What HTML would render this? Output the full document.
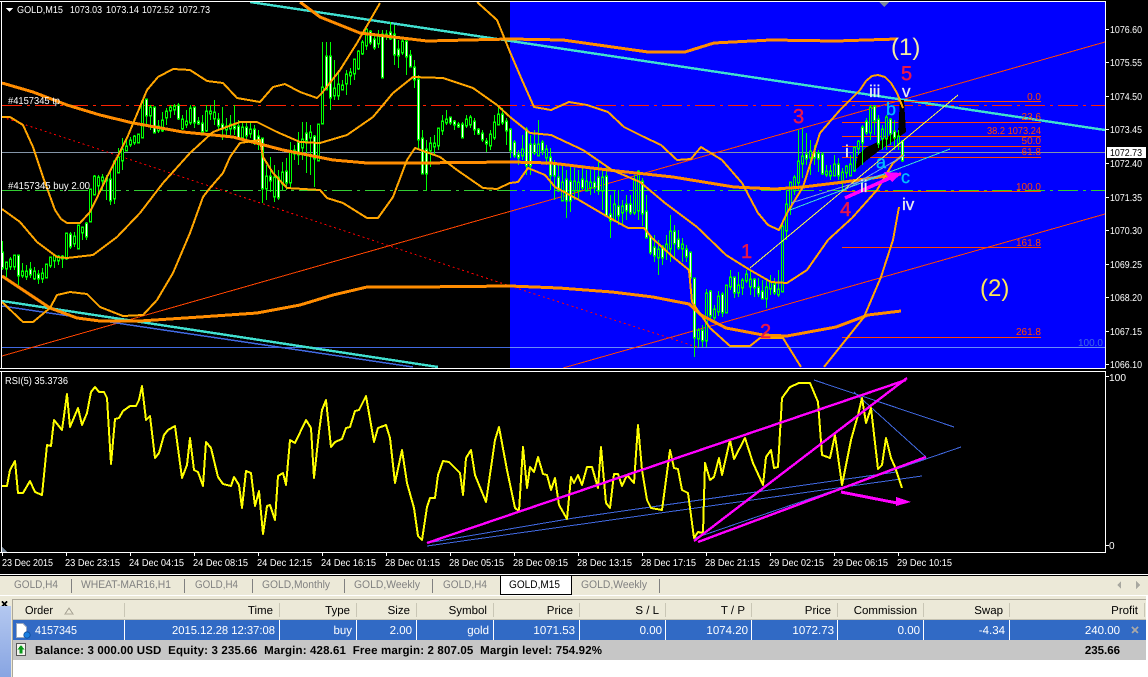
<!DOCTYPE html>
<html><head><meta charset="utf-8"><title>GOLD,M15</title>
<style>
html,body{margin:0;padding:0;background:#000;overflow:hidden}
svg{display:block}
text{font-family:"Liberation Sans",sans-serif;font-size:10px}
.l{fill:none;stroke:#ffa500;stroke-width:2;stroke-linejoin:round}
.m{fill:none;stroke:#ff8c00;stroke-width:3;stroke-linejoin:round}
.ax{fill:#fff;font-size:10px}
.dt{fill:#fff;font-size:10px}
.f{fill:#ff4500;font-size:10px;text-anchor:end}
.fl{stroke:#ff4500;stroke-width:1}
.tb{fill:#808080;font-size:11px}
.sp{stroke:#808080;stroke-width:1}
.h{fill:#000;font-size:11.5px;text-anchor:end}
.r{fill:#fff;font-size:11.5px;text-anchor:end}
.hs{stroke:#fff;stroke-width:1}
.b{font-weight:bold;font-size:11.5px;fill:#000}
.w{font-size:20px;fill:#e8174a;stroke:#e8174a;stroke-width:.5}
.v{font-size:17px;fill:#ececec;stroke:#ececec;stroke-width:.3}
.c{font-size:18px;fill:#00bfff;stroke:#00bfff;stroke-width:.3}
</style></head><body>
<svg xmlns="http://www.w3.org/2000/svg" width="1148" height="677" viewBox="0 0 1148 677" shape-rendering="crispEdges">
<defs>
<path id="bw" d="M2 253V267M18 256V275M30 270V274M38 275V278M70 235V246M86 224V236M110 180V200M146 100V115M154 108V132M178 106V118M194 108V122M198 122V123M202 124V131M218 120V125M222 125V128M234 127V128M238 127V137M246 128V135M254 130V142M258 137V143M262 139V188M270 177V180M278 178V197M286 172V182M294 151V153M298 143V154M306 134V140M314 137V158M326 57V89M330 57V97M370 32V42M374 40V47M382 35V77M390 33V38M394 35V54M398 50V55M406 42V56M410 56V66M414 68V79M418 80V139M422 139V173M426 150V173M450 118V122M454 122V124M458 125V126M462 125V137M474 122V129M478 130V133M482 134V139M486 142V143M502 115V122M506 122V130M510 130V150M514 143V155M518 155V157M526 130V165M530 145V165M534 145V152M542 143V150M550 158V175M554 165V175M558 178V190M566 180V200M570 182V200M582 180V187M594 183V187M598 178V190M606 177V215M610 215V220M618 207V215M626 205V210M630 205V212M642 182V213M646 212V237M650 237V252M654 248V255M662 247V257M674 232V243M678 240V247M686 250V256M690 253V277M694 279V337M702 331V340M710 292V315M722 295V312M734 278V292M754 280V287M758 288V293M762 292V298M774 285V292M806 155V158M814 153V157M818 154V158M822 155V173M838 165V175M862 128V142M866 122V132M874 107V120M878 120V143M890 120V133M894 132V137M902 142V160"/>
<path id="bu" d="M6 263V268M10 260V266M14 256V266M22 272V275M26 272V276M34 272V278M42 274V278M46 265V277M50 258V265M54 256V260M58 257V260M62 257V258M66 234V258M74 237V243M78 226V248M82 228V232M90 190V221M94 177V194M98 178V185M102 178V180M106 179V180M114 162V198M118 158V172M122 150V160M126 147V150M130 141V144M134 137V142M138 135V142M142 102V137M150 108V115M158 127V130M162 121V130M166 112V117M170 108V110M174 107V109M182 120V128M186 122V124M190 109V122M206 112V130M210 112V113M214 113V118M226 127V129M230 125V128M242 128V137M250 130V133M266 177V188M274 178V196M282 173V183M290 152V182M302 140V147M310 133V137M318 125V160M322 88V123M334 89V95M338 85V95M342 86V89M346 75V83M350 73V75M354 60V73M358 52V68M362 43V53M366 30V45M378 37V43M386 35V36M402 42V52M430 144V150M434 144V146M438 129V145M442 122V130M446 120V122M466 120V125M470 118V124M490 135V145M494 123V137M498 115V124"/>
<path id="bv" d="M522 150V155M538 145V155M546 150V157M562 183V200M574 182V190M578 183V190M586 182V190M590 183V187M602 178V190M614 205V220M622 207V212M634 180V212M638 172V210M658 250V257M666 245V250M670 232V248M682 245V248M698 331V338M706 294V340M714 310V317M718 297V311M726 286V312M730 278V286M738 286V292M742 281V287M746 275V280M750 280V286M766 288V298M770 283V288M778 290V294M782 227V291M786 205V230M790 183V207M794 178V190M798 162V182M802 157V163M810 152V157M826 172V174M830 172V175M834 165V175M842 173V182M846 167V172M850 165V175M854 148V170M858 142V148M870 108V132M882 130V138M886 118V138M898 137V143"/>
<linearGradient id="side" x1="0" y1="0" x2="0" y2="1"><stop offset="0" stop-color="#b4c8f0"/><stop offset="1" stop-color="#88a5e2"/></linearGradient>
</defs>

<rect width="1148" height="677" fill="#000"/>
<rect x="510" y="2" width="595" height="366" fill="#0000ff"/>

<!-- horizontal levels -->
<path d="M2 152.5H1105" stroke="#8495a8" fill="none"/>
<path d="M2 347.5H510" stroke="#4169e1" fill="none"/>
<path d="M510 347.5H1105" stroke="#6a8cf5" fill="none"/>
<path d="M2 105.5H1105" stroke="#ff2200" stroke-dasharray="20 5 3 5" fill="none"/>
<path d="M2 190.5H1105" stroke="#32cd32" stroke-dasharray="20 5 3 5" fill="none"/>

<!-- trend lines -->
<path d="M2 356L1105 42" stroke="#ff4500" fill="none"/>
<path d="M563 368L1105 214" stroke="#ff4500" fill="none"/>
<path d="M2 117L510 286L697 347" stroke="#ff0000" stroke-dasharray="2 3" fill="none"/>
<path d="M2 306L413 367" stroke="#4169e1" stroke-width="1.5" fill="none"/>
<path d="M2 301L438 367" stroke="#40e0d0" stroke-width="2.4" fill="none"/>
<path d="M250 2L1105 130" stroke="#40e0d0" stroke-width="2.4" fill="none"/>

<!-- fibonacci -->
<path class="fl" d="M842 101.5H1041M842 122.5H1041M842 136.5H1041M842 146.5H1041M842 157.5H1041M842 191.5H1041M842 247.5H1041M842 337.5H1041"/>
<g text-rendering="geometricPrecision">
<text class="f" x="1041" y="100">0.0</text>
<text class="f" x="1041" y="120">23.6</text>
<text class="f" x="1041" y="134" textLength="54" lengthAdjust="spacingAndGlyphs">38.2 1073.24</text>
<text class="f" x="1041" y="144">50.0</text>
<text class="f" x="1041" y="155">61.8</text>
<text class="f" x="1041" y="190">100.0</text>
<text class="f" x="1041" y="246">161.8</text>
<text class="f" x="1041" y="335">261.8</text>
<text class="f" x="1103" y="346" style="fill:#4169e1">100.0</text>
</g>

<!-- wedge -->
<polygon points="855,170 858,155 867,147 880,141 893,134 898,132 900,100 904,100 906,132 895,140 880,150 867,160" fill="#000"/>

<!-- candles -->
<g transform="translate(.5 0)">
<path stroke="#00ff00" fill="none" d="M2 241V270M6 262V277M10 257V270M14 255V270M18 255V285M22 263V278M26 265V280M30 262V278M34 267V280M38 270V284M42 268V283M46 265V278M50 258V268M54 255V268M58 255V265M62 255V268M66 234V260M70 232V249M74 232V247M78 225V248M82 228V240M86 222V240M90 190V222M94 175V195M98 175V195M102 174V190M106 175V200M110 170V205M114 160V204M118 148V172M122 138V170M126 137V150M130 137V147M134 135V145M138 135V143M142 100V137M146 100V125M150 105V130M154 108V133M158 120V133M162 112V132M166 108V125M170 105V118M174 104V115M178 103V120M182 115V130M186 110V128M190 105V125M194 107V128M198 117V125M202 115V133M206 105V132M210 105V120M214 100V125M218 113V130M222 107V140M226 118V135M230 115V135M234 105V135M238 120V140M242 122V140M246 122V142M250 122V138M254 125V145M258 130V150M262 138V203M266 165V200M270 157V192M274 165V202M278 170V200M282 162V190M286 158V190M290 142V187M294 145V160M298 132V165M302 122V160M306 122V173M310 125V175M314 135V187M318 124V160M322 42V123M326 42V90M330 42V110M334 60V100M338 70V100M342 80V90M346 70V95M350 68V85M354 60V80M358 50V70M362 40V55M366 25V50M370 30V45M374 35V50M378 30V48M382 30V77M386 30V40M390 22V40M394 25V65M398 40V68M402 37V55M406 37V75M410 50V67M414 60V88M418 75V150M422 130V173M426 140V191M430 137V167M434 135V155M438 128V150M442 115V135M446 110V125M450 118V125M454 120V130M458 122V128M462 122V138M466 115V128M470 115V128M474 118V135M478 128V135M482 130V142M486 138V152M490 130V150M494 115V140M498 105V125M502 108V125M506 118V145M510 128V158M514 140V158M518 150V165M522 135V160M526 127V175M530 135V175M534 130V155M538 120V155M542 140V155M546 145V165M550 148V190M554 160V200M558 165V192M562 165V200M566 170V218M570 165V212M574 168V200M578 170V200M582 165V190M586 170V190M590 170V195M594 170V193M598 162V195M602 168V210M606 165V217M610 195V238M614 190V222M618 190V225M622 200V225M626 195V220M630 195V215M634 175V215M638 170V220M642 178V226M646 195V237M650 235V255M654 235V262M658 240V275M662 245V265M666 235V260M670 215V262M674 225V258M678 230V250M682 238V262M686 245V262M690 252V285M694 278V357M698 328V347M702 325V347M706 289V347M710 290V320M714 305V320M718 291V316M722 292V317M726 285V312M730 270V290M734 277V298M738 272V297M742 278V295M746 270V283M750 270V295M754 278V297M758 278V297M762 280V298M766 278V308M770 275V295M774 278V295M778 270V297M782 223V292M786 190V240M790 182V215M794 175V195M798 130V190M802 128V178M806 133V165M810 140V175M814 145V165M818 150V172M822 152V175M826 165V177M830 165V180M834 155V175M838 158V180M842 168V190M846 165V178M850 155V172M854 148V172M858 140V155M862 125V165M866 118V135M870 105V140M874 105V135M878 115V148M882 125V150M886 115V150M890 118V145M894 120V150M898 130V150M902 140V162"/>
<g fill="none" stroke="#00ff00" stroke-width="3" stroke-linecap="square"><use href="#bw"/><use href="#bu"/><use href="#bv"/></g>
<use href="#bw" fill="none" stroke="#fff"/>
<use href="#bu" fill="none" stroke="#000"/>
<use href="#bv" fill="none" stroke="#0000ff"/>
</g>

<!-- moving averages -->
<polyline class="m" points="2,83 33,92 67,105 100,115 133,123 183,132 233,137 283,150 333,160 367,163 417,163 510,162 551,163 608,170 673,177 734,187 775,189 803,187 844,182 901,174"/>
<polyline class="m" points="300,2 320,17 360,33 427,41 510,39 563,40 648,52 685,52 714,43 771,40 836,41 897,39"/>
<polyline class="m" points="2,276 20,288 50,308 77,318 100,321 140,321 200,317 257,313 300,305 333,295 367,287 417,287 510,286 559,288 612,292 653,297 689,304 701,315 726,328 763,335 787,336 836,327 868,315 901,311"/>

<!-- bollinger -->
<polyline class="l" points="2,117 10,117 23,125 33,147 43,177 55,210 61,219 67,223 80,223 90,212 107,177 127,138 147,90 158,77 173,69 190,70 207,81 223,83 237,98 260,102 273,87 285,84 300,92 317,98 322,93 340,70 357,43 380,3"/>
<polyline class="l" points="2,209 20,222 37,242 57,257 67,258 93,255 117,237 140,213 163,183 190,153 213,132 240,122 257,122 277,132 300,142 320,143 347,135 373,117 393,93 413,77 443,78 473,88 497,105 510,117 530,133 551,135 583,150 612,170 640,182 665,203 697,227 726,255 750,270 771,282 787,283 807,270 828,240 852,218 877,190 893,163 903,155"/>
<polyline class="l" points="2,302 23,322 33,322 50,308 57,295 70,292 87,294 100,307 123,316 143,315 157,300 173,273 190,233 203,197 210,188 223,173 230,157 240,143 260,140 263,157 273,173 287,188 320,190 327,198 343,203 367,218 378,218 393,197 407,160 415,148 440,157 457,170 483,188 497,189 510,183 518,182 528,168 545,175 555,187 579,200 608,217 628,228 644,228 652,238 673,257 689,270 692,302 710,328 730,346 750,346 760,338 783,338 801,367"/>
<polyline class="l" points="477,2 497,20 510,52 522,80 534,107 551,110 569,102 587,105 608,112 624,127 644,137 661,145 677,160 691,159 701,147 722,160 742,183 758,213 768,225 779,230 787,213 803,187 820,133 840,110 860,90 866,81 872,76 878,75 885,77 891,83 897,93 903,108"/>
<polyline class="l" points="824,367 848,337 864,317 881,277 893,240 899,207"/>

<!-- thin object lines -->
<path d="M750 268L958 95" stroke="#ffff40" fill="none"/>
<path d="M791 203L887 173" stroke="#7b9fd8" fill="none"/>
<path d="M790 210L950 149" stroke="#40e0d0" fill="none"/>
<path d="M843 191L905 155" stroke="#6fa8e8" fill="none"/>
<!-- magenta arrow chart -->
<path d="M845 198L890 178" stroke="#ff00ff" stroke-width="3.5" fill="none"/>
<polygon points="884,172 902,173 892,182" fill="#ff00ff"/>

<!-- white frames -->
<path d="M0 1.5H1105.5V368.5H0M1.5 1V369" stroke="#fff" fill="none"/>
<path d="M0 371.5H1105.5V552.5H0M1.5 371V553" stroke="#fff" fill="none"/>
<polygon points="879,2 889,2 884,7" fill="#778899"/>
<polygon points="2,547 2,552 7,552" fill="#778899"/>
<polygon points="6,8 13,8 9.5,12" fill="#fff"/>

<!-- chart text -->
<g text-rendering="geometricPrecision">
<text x="17" y="13" fill="#fff" textLength="46" lengthAdjust="spacingAndGlyphs">GOLD,M15</text>
<text x="70" y="13" fill="#fff" textLength="32" lengthAdjust="spacingAndGlyphs">1073.03</text>
<text x="106" y="13" fill="#fff" textLength="33" lengthAdjust="spacingAndGlyphs">1073.14</text>
<text x="142" y="13" fill="#fff" textLength="32" lengthAdjust="spacingAndGlyphs">1072.52</text>
<text x="178" y="13" fill="#fff" textLength="32" lengthAdjust="spacingAndGlyphs">1072.73</text>
<text x="8" y="104" fill="#fff" textLength="52" lengthAdjust="spacingAndGlyphs">#4157345 tp</text>
<text x="8" y="189" fill="#fff" textLength="82" lengthAdjust="spacingAndGlyphs">#4157345 buy 2.00</text>

<text x="1110" y="33" class="ax" textLength="32" lengthAdjust="spacingAndGlyphs">1076.60</text>
<text x="1110" y="66" class="ax" textLength="32" lengthAdjust="spacingAndGlyphs">1075.55</text>
<text x="1110" y="100" class="ax" textLength="32" lengthAdjust="spacingAndGlyphs">1074.50</text>
<text x="1110" y="133" class="ax" textLength="32" lengthAdjust="spacingAndGlyphs">1073.45</text>
<text x="1110" y="167" class="ax" textLength="32" lengthAdjust="spacingAndGlyphs">1072.40</text>
<text x="1110" y="201" class="ax" textLength="32" lengthAdjust="spacingAndGlyphs">1071.35</text>
<text x="1110" y="234" class="ax" textLength="32" lengthAdjust="spacingAndGlyphs">1070.30</text>
<text x="1110" y="268" class="ax" textLength="32" lengthAdjust="spacingAndGlyphs">1069.25</text>
<text x="1110" y="301" class="ax" textLength="32" lengthAdjust="spacingAndGlyphs">1068.20</text>
<text x="1110" y="335" class="ax" textLength="32" lengthAdjust="spacingAndGlyphs">1067.15</text>
<text x="1110" y="368" class="ax" textLength="32" lengthAdjust="spacingAndGlyphs">1066.10</text>
</g>
<path d="M1105 29.5h4M1105 62.5h4M1105 96.5h4M1105 129.5h4M1105 163.5h4M1105 197.5h4M1105 230.5h4M1105 264.5h4M1105 297.5h4M1105 331.5h4M1105 364.5h4" stroke="#fff"/>
<rect x="1107" y="147" width="39" height="11" fill="#fff"/>
<text x="1110" y="156" fill="#000" textLength="32" lengthAdjust="spacingAndGlyphs" text-rendering="geometricPrecision">1072.73</text>

<!-- wave labels -->
<g text-rendering="geometricPrecision">
<text x="891" y="55" style="font-size:24px" fill="#f5eea0">(1)</text>
<text x="980" y="296" style="font-size:24px" fill="#ffe955">(2)</text>
<text x="901" y="80" class="w">5</text>
<text x="793" y="123" class="w">3</text>
<text x="741" y="258" class="w">1</text>
<text x="760" y="338" class="w">2</text>
<text x="840" y="216" class="w">4</text>
<text x="902" y="97" class="v">v</text>
<text x="869" y="97" class="v">iii</text>
<text x="845" y="157" class="v">i</text>
<text x="860" y="192" class="v">ii</text>
<text x="902" y="210" class="v">iv</text>
<text x="886" y="115" class="c">b</text>
<text x="876" y="168" class="c">a</text>
<text x="901" y="183" class="c">c</text>
</g>

<!-- RSI -->
<text x="5" y="384" fill="#fff" textLength="63" lengthAdjust="spacingAndGlyphs" text-rendering="geometricPrecision">RSI(5) 35.3736</text>
<path d="M427 546L922 476M427 543L574 518L896 472M695 538L961 447M814 380L954 427M854 392L926 457" stroke="#4169e1" fill="none"/>
<polyline points="2,486 7,486 10,470 15,461 18,493 23,493 30,481 35,492 42,495 47,445 51,446 54,420 62,430 67,394 70,427 78,408 82,425 87,413 91,392 95,387 99,392 104,392 107,398 111,464 115,419 119,418 123,411 130,406 136,406 139,400 142,386 146,420 150,416 155,458 159,453 164,435 168,430 175,426 182,478 187,465 190,438 194,470 198,472 203,486 206,442 211,448 218,477 223,484 231,486 234,477 239,485 242,508 246,471 251,473 255,506 259,491 263,534 267,506 270,505 275,520 278,476 283,473 286,485 290,440 295,443 306,420 311,428 314,478 319,432 322,410 326,400 331,447 335,442 342,439 346,428 350,427 355,411 359,410 366,396 374,442 378,428 386,425 390,438 395,483 402,450 407,483 414,508 418,536 422,540 427,507 430,498 435,498 438,475 443,461 449,462 460,473 463,495 466,458 471,450 475,475 486,502 495,440 499,427 507,470 515,508 519,511 523,447 527,488 530,467 534,472 538,457 543,474 547,475 551,490 555,478 559,505 567,519 571,477 574,483 578,475 582,485 587,467 592,467 598,488 601,447 606,503 610,508 614,474 618,474 622,486 627,475 634,483 638,425 642,470 647,500 651,508 662,510 670,450 674,468 678,469 682,490 688,493 694,538 698,532 703,533 705,463 710,480 714,477 719,458 722,475 730,440 734,459 745,438 753,463 763,485 766,457 771,450 774,468 778,467 782,398 790,387 799,383 810,383 818,402 822,455 830,458 835,435 842,485 851,440 858,415 862,398 866,423 871,408 878,469 882,465 886,438 891,458 895,467 902,488" fill="none" stroke="#ffff00" stroke-width="2" stroke-linejoin="round"/>
<path d="M427 543L906 380M694 541L907 378M698 542L926 457" stroke="#ff00ff" stroke-width="2.4" fill="none"/>
<path d="M841 492L897 503" stroke="#ff00ff" stroke-width="3" fill="none"/>
<polygon points="896,497 911,502 896,506" fill="#ff00ff"/>
<g text-rendering="geometricPrecision">
<text x="1109" y="381" fill="#fff" textLength="17" lengthAdjust="spacingAndGlyphs">100</text>
<text x="1109" y="549" fill="#fff">0</text>
</g>
<path d="M1105 376.5h4M1105 545.5h4M2.5 552v4M66.5 552v4M130.5 552v4M194.5 552v4M258.5 552v4M322.5 552v4M386.5 552v4M450.5 552v4M514.5 552v4M578.5 552v4M642.5 552v4M706.5 552v4M770.5 552v4M834.5 552v4M898.5 552v4" stroke="#fff"/>
<g text-rendering="geometricPrecision">
<text class="dt" x="2" y="566" textLength="51" lengthAdjust="spacingAndGlyphs">23 Dec 2015</text>
<text class="dt" x="65" y="566" textLength="55" lengthAdjust="spacingAndGlyphs">23 Dec 23:15</text>
<text class="dt" x="129" y="566" textLength="55" lengthAdjust="spacingAndGlyphs">24 Dec 04:15</text>
<text class="dt" x="193" y="566" textLength="55" lengthAdjust="spacingAndGlyphs">24 Dec 08:15</text>
<text class="dt" x="257" y="566" textLength="55" lengthAdjust="spacingAndGlyphs">24 Dec 12:15</text>
<text class="dt" x="321" y="566" textLength="55" lengthAdjust="spacingAndGlyphs">24 Dec 16:15</text>
<text class="dt" x="385" y="566" textLength="55" lengthAdjust="spacingAndGlyphs">28 Dec 01:15</text>
<text class="dt" x="449" y="566" textLength="55" lengthAdjust="spacingAndGlyphs">28 Dec 05:15</text>
<text class="dt" x="513" y="566" textLength="55" lengthAdjust="spacingAndGlyphs">28 Dec 09:15</text>
<text class="dt" x="577" y="566" textLength="55" lengthAdjust="spacingAndGlyphs">28 Dec 13:15</text>
<text class="dt" x="641" y="566" textLength="55" lengthAdjust="spacingAndGlyphs">28 Dec 17:15</text>
<text class="dt" x="705" y="566" textLength="55" lengthAdjust="spacingAndGlyphs">28 Dec 21:15</text>
<text class="dt" x="769" y="566" textLength="55" lengthAdjust="spacingAndGlyphs">29 Dec 02:15</text>
<text class="dt" x="833" y="566" textLength="55" lengthAdjust="spacingAndGlyphs">29 Dec 06:15</text>
<text class="dt" x="897" y="566" textLength="55" lengthAdjust="spacingAndGlyphs">29 Dec 10:15</text>
</g>

<!-- bottom panel -->
<rect x="0" y="574" width="1148" height="103" fill="#ece9d8"/>
<rect x="0" y="574" width="1148" height="1" fill="#fff"/>
<rect x="0" y="575" width="1148" height="1" fill="#000"/>
<rect x="0" y="595" width="1148" height="1" fill="#fff"/>
<rect x="500.5" y="575.5" width="71" height="19" fill="#fff" stroke="#000"/>
<path class="sp" d="M71.5 579v14M184.5 579v14M252.5 579v14M344.5 579v14M432.5 579v14M659.5 579v14"/>
<g text-rendering="geometricPrecision">
<text class="tb" x="14" y="588" textLength="44" lengthAdjust="spacingAndGlyphs">GOLD,H4</text>
<text class="tb" x="81" y="588" textLength="90" lengthAdjust="spacingAndGlyphs">WHEAT-MAR16,H1</text>
<text class="tb" x="195" y="588" textLength="43" lengthAdjust="spacingAndGlyphs">GOLD,H4</text>
<text class="tb" x="262" y="588" textLength="68" lengthAdjust="spacingAndGlyphs">GOLD,Monthly</text>
<text class="tb" x="354" y="588" textLength="66" lengthAdjust="spacingAndGlyphs">GOLD,Weekly</text>
<text class="tb" x="443" y="588" textLength="44" lengthAdjust="spacingAndGlyphs">GOLD,H4</text>
<text x="509" y="588" style="font-size:11px" fill="#000" textLength="51" lengthAdjust="spacingAndGlyphs">GOLD,M15</text>
<text class="tb" x="581" y="588" textLength="66" lengthAdjust="spacingAndGlyphs">GOLD,Weekly</text>
</g>
<polygon points="1121,581 1121,589 1117,585" fill="#a8a8a0"/>
<polygon points="1136,581 1136,589 1140,585" fill="#a8a8a0"/>

<!-- table -->
<rect x="12" y="599" width="1134" height="78" fill="#fff"/>
<rect x="1146" y="596" width="2" height="81" fill="#fff"/>
<path d="M12.5 599V677M12 599.5H1146" stroke="#aca899" fill="none"/>
<rect x="13" y="600" width="1133" height="19" fill="#ece9d8"/>
<rect x="13" y="619" width="1133" height="1" fill="#c5c2b2"/>
<rect x="13" y="620" width="1133" height="20" fill="#316ac5"/>
<rect x="13" y="640" width="1133" height="20" fill="#c6c6c6"/>
<path d="M124.5 603v14M279.5 603v14M356.5 603v14M416.5 603v14M493.5 603v14M579.5 603v14M665.5 603v14M751.5 603v14M837.5 603v14M923.5 603v14M1009.5 603v14M1144.5 603v14" stroke="#c9c6b5"/>
<path class="hs" d="M124.5 620v20M279.5 620v20M356.5 620v20M416.5 620v20M493.5 620v20M579.5 620v20M665.5 620v20M751.5 620v20M837.5 620v20M923.5 620v20M1009.5 620v20"/>

<path d="M2 601.5L7 606.5M7 601.5L2 606.5" stroke="#000" stroke-width="1.6" fill="none"/>
<rect x="0" y="606" width="11" height="71" fill="url(#side)"/>

<g text-rendering="geometricPrecision">
<text x="25" y="614" style="font-size:11.5px" fill="#000" textLength="28" lengthAdjust="spacingAndGlyphs">Order</text>
<polygon points="69,608 65,614 73,614" fill="none" stroke="#aca899" stroke-width="1"/>
<text class="h" x="273" y="614">Time</text>
<text class="h" x="350" y="614">Type</text>
<text class="h" x="410" y="614">Size</text>
<text class="h" x="487" y="614">Symbol</text>
<text class="h" x="573" y="614">Price</text>
<text class="h" x="659" y="614">S / L</text>
<text class="h" x="745" y="614">T / P</text>
<text class="h" x="831" y="614">Price</text>
<text class="h" x="917" y="614">Commission</text>
<text class="h" x="1003" y="614">Swap</text>
<text class="h" x="1138" y="614">Profit</text>

<text x="35" y="634" style="font-size:11.5px" fill="#fff" textLength="42" lengthAdjust="spacingAndGlyphs">4157345</text>
<text class="r" x="275" y="634" textLength="103" lengthAdjust="spacingAndGlyphs">2015.12.28 12:37:08</text>
<text class="r" x="352" y="634">buy</text>
<text class="r" x="412" y="634">2.00</text>
<text class="r" x="489" y="634">gold</text>
<text class="r" x="575" y="634">1071.53</text>
<text class="r" x="662" y="634">0.00</text>
<text class="r" x="748" y="634">1074.20</text>
<text class="r" x="834" y="634">1072.73</text>
<text class="r" x="920" y="634">0.00</text>
<text class="r" x="1005" y="634">-4.34</text>
<text class="r" x="1120" y="634">240.00</text>

<text class="b" x="35" y="654" textLength="567" xml:space="preserve">Balance: 3 000.00 USD  Equity: 3 235.66  Margin: 428.61  Free margin: 2 807.05  Margin level: 754.92%</text>
<text class="b" x="1120" y="654" text-anchor="end">235.66</text>
</g>
<path d="M1132 627L1138 633M1138 627L1132 633" stroke="#a8a8a8" stroke-width="2" fill="none"/>

<!-- icons -->
<path d="M16.5 623.5H23L26.5 627V637.5H16.5Z" fill="#fff" stroke="#9aa8c0"/>
<circle cx="27" cy="635" r="3.2" fill="#1a7ee0" stroke="#0a4a9a" stroke-width=".8" shape-rendering="auto"/>
<rect x="16.5" y="643.5" width="9" height="12" fill="#f4f4ee" stroke="#555"/>
<path d="M21 645L24.5 649.5H22.5V653.5H19.5V649.5H17.5Z" fill="#0a9a1a"/>
</svg>
</body></html>
